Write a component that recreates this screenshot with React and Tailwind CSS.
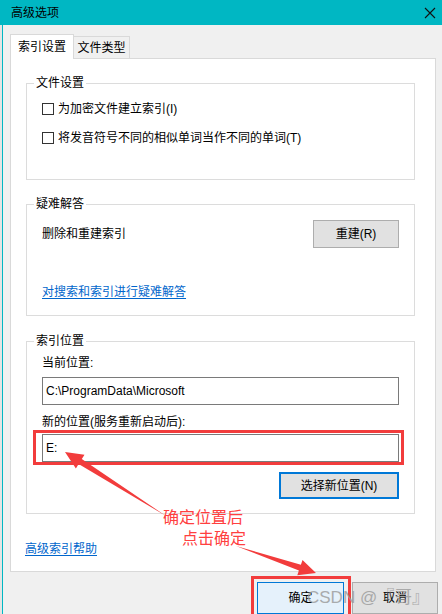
import React from 'react';

// Windows "高级选项" dialog with red annotation marks on top
const font = { fontFamily: '"Liberation Sans", "Noto Sans CJK SC", sans-serif' };

const GroupBox = ({ title, className, children }) => (
  <div className={`relative border border-[#dcdcdc] ${className}`}>
    {/* legend sits over the top border */}
    <span className="absolute left-[7px] top-[-9px] bg-white px-[2px] text-[12px] leading-[16px] text-black">
      {title}
    </span>
    {children}
  </div>
);

const CheckRow = ({ label, className }) => (
  <div className={`flex h-[16px] items-center ${className}`}>
    <span className="h-[12px] w-[12px] border border-[#333333] bg-white" />
    <span className="ml-[4px] text-[12px] leading-[16px]">{label}</span>
  </div>
);

export default function App() {
  return (
    <div className="relative h-[614px] w-[442px] overflow-hidden bg-[#f0f0f0] text-black" style={font}>
      {/* Title bar */}
      <div className="flex h-[25px] items-center justify-between bg-[#00b7c3] pl-[11px] pr-[6px]">
        <span className="text-[12px] leading-[16px]">高级选项</span>
        <svg width="12" height="12" viewBox="0 0 12 12">
          <path d="M1 1 L11 11 M11 1 L1 11" stroke="#111" strokeWidth="1.1" />
        </svg>
      </div>

      <div className="flex h-[589px]">
        {/* window edge */}
        <div className="w-[2px] bg-[#e4e4e4]" />
        <div className="w-px bg-[#00b7c3]" />

        <div className="flex flex-col pl-[7px] pt-[9px]">
          {/* Tabs */}
          <div className="flex items-end">
            <div className="relative z-10 mb-[-1px] flex h-[25px] w-[64px] items-center justify-center border border-b-0 border-[#d9d9d9] bg-white text-[12px]">
              索引设置
            </div>
            <div className="flex h-[22px] w-[56px] items-center justify-center border border-l-0 border-b-0 border-[#d9d9d9] text-[12px]">
              文件类型
            </div>
          </div>

          {/* Panel */}
          <div className="h-[516px] w-[426px] border border-[#d9d9d9] bg-white pl-[15px] pt-[24px]">
            <GroupBox title="文件设置" className="h-[97px] w-[389px] pl-[15px] pt-[17px]">
              <CheckRow label="为加密文件建立索引(I)" />
              <CheckRow label="将发音符号不同的相似单词当作不同的单词(T)" className="mt-[13px]" />
            </GroupBox>

            <GroupBox title="疑难解答" className="mt-[24px] h-[112px] w-[389px] px-[15px] pt-[15px]">
              <div className="flex items-center justify-between">
                <span className="text-[12px] leading-[16px]">删除和重建索引</span>
                <button className="h-[28px] w-[86px] border border-[#adadad] bg-[#e1e1e1] text-[12px]">
                  重建(R)
                </button>
              </div>
              <div className="mt-[36px] text-[12px] leading-[16px] text-[#0066cc] underline underline-offset-2">
                对搜索和索引进行疑难解答
              </div>
            </GroupBox>

            <GroupBox title="索引位置" className="mt-[25px] h-[173px] w-[389px] px-[15px] pt-[13px]">
              <div className="text-[12px] leading-[16px]">当前位置:</div>
              <div className="mt-[6px] flex h-[28px] w-[357px] items-center border border-[#7a7a7a] pl-[3px] text-[12px]">
                C:\ProgramData\Microsoft
              </div>
              <div className="mt-[9px] text-[12px] leading-[16px]">新的位置(服务重新启动后):</div>
              <div className="mt-[4px] flex h-[28px] w-[357px] items-center border border-[#7a7a7a] pl-[3px] text-[12px]">
                E:
              </div>
              <div className="mt-[10px] flex justify-end">
                <button className="h-[27px] w-[120px] border-2 border-[#0078d7] bg-[#e1e1e1] text-[12px]">
                  选择新位置(N)
                </button>
              </div>
            </GroupBox>

            <div className="ml-[-1px] mt-[27px] text-[12px] leading-[16px] text-[#0066cc] underline underline-offset-2">
              高级索引帮助
            </div>
          </div>

          {/* Dialog buttons */}
          <div className="ml-[247px] mt-[10px] flex gap-[8px]">
            <button className="h-[32px] w-[87px] border border-[#0078d7] bg-[#e5f1fb] pb-[1px] text-[12px]">
              确定
            </button>
            <button className="h-[32px] w-[86px] border border-[#adadad] bg-[#e1e1e1] pb-[1px] text-[12px]">
              取消
            </button>
          </div>
        </div>
      </div>

      {/* Annotation: red boxes */}
      <div className="pointer-events-none absolute left-[33px] top-[430px] h-[35px] w-[371px] border-[3px] border-[#f23c3c]" />
      <div className="pointer-events-none absolute left-[251px] top-[576px] h-[42px] w-[100px] border-[3px] border-[#f23c3c]" />

      {/* Annotation: arrows */}
      <svg className="pointer-events-none absolute left-0 top-0" width="442" height="614">
        <polygon
          points="65,452 84.5,454.8 81.8,459.1 166,516 78.6,464.1 75.9,468.4"
          fill="#f23c3c"
        />
        <polygon
          points="316,573 297.3,575.2 298.9,570.4 236,546 300.9,564.8 302.5,560"
          fill="#f23c3c"
        />
      </svg>

      {/* Annotation: text */}
      <div className="pointer-events-none absolute left-[163px] top-[508px] text-[16px] leading-[20px] text-[#ff4040]">
        确定位置后
      </div>
      <div className="pointer-events-none absolute left-[182px] top-[529px] text-[16px] leading-[20px] text-[#ff4040]">
        点击确定
      </div>

      {/* Watermark */}
      <div className="pointer-events-none absolute left-[307px] top-[587px] text-[17px] leading-[22px] text-[#9a9a9a] opacity-80">
        CSDN @『
      </div>
      <div className="pointer-events-none absolute left-[395px] top-[587px] text-[17px] leading-[22px] text-[#9a9a9a] opacity-80">
        哥』
      </div>
    </div>
  );
}
